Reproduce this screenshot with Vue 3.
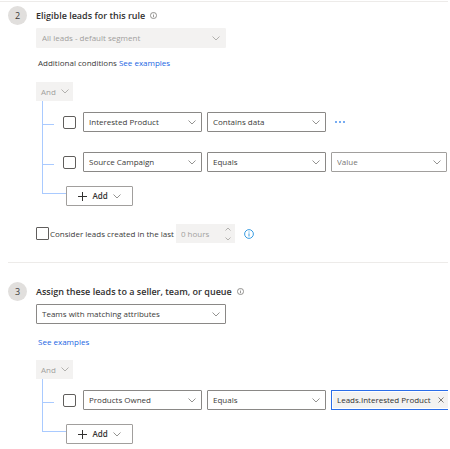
<script setup>
import { ref } from 'vue'

const fields = ['Interested Product', 'Source Campaign', 'Products Owned']
const operators = ['Contains data', 'Equals']

const leadConditions = ref([
  { field: 'Interested Product', operator: 'Contains data', picked: false },
  { field: 'Source Campaign', operator: 'Equals', picked: false, value: '' },
])
const teamCondition = ref({ field: 'Products Owned', operator: 'Equals', picked: false })
const assignTo = ref('Teams with matching attributes')
const recentOnly = ref(false)
</script>

<template>
  <main class="page">
    <section class="step">
      <span class="badge">2</span>
      <div class="body">
        <h2 class="title">
          Eligible leads for this rule
          <svg class="info" viewBox="0 0 16 16" aria-hidden="true"><circle cx="8" cy="8" r="7" /><path d="M8 7v5M8 4v1.6" /></svg>
        </h2>
        <div class="picker wide off">
          <select aria-label="Segment" disabled><option>All leads - default segment</option></select>
          <svg class="chevron" viewBox="0 0 8 5" aria-hidden="true"><path d="M.5.5 4 4 7.5.5" /></svg>
        </div>
        <p class="note">Additional conditions <a href="#examples">See examples</a></p>

        <button class="and" disabled>
          And
          <svg class="chevron" viewBox="0 0 8 5" aria-hidden="true"><path d="M.5.5 4 4 7.5.5" /></svg>
        </button>
        <ul class="tree">
          <li v-for="row in leadConditions" :key="row.field" class="row">
            <input v-model="row.picked" type="checkbox" class="box" :aria-label="'Select ' + row.field" />
            <div class="picker">
              <select v-model="row.field" aria-label="Field"><option v-for="f in fields" :key="f">{{ f }}</option></select>
              <svg class="chevron" viewBox="0 0 8 5" aria-hidden="true"><path d="M.5.5 4 4 7.5.5" /></svg>
            </div>
            <div class="picker">
              <select v-model="row.operator" aria-label="Operator"><option v-for="o in operators" :key="o">{{ o }}</option></select>
              <svg class="chevron" viewBox="0 0 8 5" aria-hidden="true"><path d="M.5.5 4 4 7.5.5" /></svg>
            </div>
            <div v-if="row.value !== undefined" class="picker value">
              <select v-model="row.value" aria-label="Value"><option value="">Value</option></select>
              <svg class="chevron" viewBox="0 0 8 5" aria-hidden="true"><path d="M.5.5 4 4 7.5.5" /></svg>
            </div>
            <button v-else class="more" aria-label="More options">
              <svg viewBox="0 0 10 2" aria-hidden="true"><circle cx="1" cy="1" r="1" /><circle cx="5" cy="1" r="1" /><circle cx="9" cy="1" r="1" /></svg>
            </button>
          </li>
          <li class="last">
            <button class="add">
              <svg class="plus" viewBox="0 0 9 9" aria-hidden="true"><path d="M4.5 0v9M0 4.5h9" /></svg>
              Add
              <svg class="chevron" viewBox="0 0 8 5" aria-hidden="true"><path d="M.5.5 4 4 7.5.5" /></svg>
            </button>
          </li>
        </ul>

        <div class="recent">
          <input id="recent" v-model="recentOnly" type="checkbox" class="box" />
          <label for="recent">Consider leads created in the last</label>
          <div class="spinner">
            <input type="text" value="0 hours" aria-label="Hours" disabled />
            <svg viewBox="0 0 6 14" aria-hidden="true"><path d="M.5 3.500 3 1 5.500 3.500M.5 10.500 3 13 5.500 10.500" /></svg>
          </div>
          <svg class="info blue" viewBox="0 0 16 16" aria-hidden="true"><circle cx="8" cy="8" r="7" /><path d="M8 7v5M8 4v1.600" /></svg>
        </div>
      </div>
    </section>

    <section class="step second">
      <span class="badge">3</span>
      <div class="body">
        <h2 class="title">
          Assign these leads to a seller, team, or queue
          <svg class="info" viewBox="0 0 16 16" aria-hidden="true"><circle cx="8" cy="8" r="7" /><path d="M8 7v5M8 4v1.6" /></svg>
        </h2>
        <div class="picker wide">
          <select v-model="assignTo" aria-label="Assign to"><option>Teams with matching attributes</option></select>
          <svg class="chevron" viewBox="0 0 8 5" aria-hidden="true"><path d="M.5.5 4 4 7.5.5" /></svg>
        </div>
        <p class="note"><a href="#examples">See examples</a></p>

        <button class="and" disabled>
          And
          <svg class="chevron" viewBox="0 0 8 5" aria-hidden="true"><path d="M.5.5 4 4 7.5.5" /></svg>
        </button>
        <ul class="tree">
          <li class="row">
            <input v-model="teamCondition.picked" type="checkbox" class="box" aria-label="Select Products Owned" />
            <div class="picker">
              <select v-model="teamCondition.field" aria-label="Field"><option v-for="f in fields" :key="f">{{ f }}</option></select>
              <svg class="chevron" viewBox="0 0 8 5" aria-hidden="true"><path d="M.5.5 4 4 7.5.5" /></svg>
            </div>
            <div class="picker">
              <select v-model="teamCondition.operator" aria-label="Operator"><option v-for="o in operators" :key="o">{{ o }}</option></select>
              <svg class="chevron" viewBox="0 0 8 5" aria-hidden="true"><path d="M.5.5 4 4 7.5.5" /></svg>
            </div>
            <div class="tags">
              <span class="tag">
                Leads.Interested Product
                <button aria-label="Remove"><svg viewBox="0 0 6 6" aria-hidden="true"><path d="M.5.5l5 5M5.500.5l-5 5" /></svg></button>
              </span>
            </div>
          </li>
          <li class="last">
            <button class="add">
              <svg class="plus" viewBox="0 0 9 9" aria-hidden="true"><path d="M4.5 0v9M0 4.5h9" /></svg>
              Add
              <svg class="chevron" viewBox="0 0 8 5" aria-hidden="true"><path d="M.5.5 4 4 7.5.5" /></svg>
            </button>
          </li>
        </ul>
      </div>
    </section>
  </main>
</template>

<style>
body {
  background: #fff;
}
</style>

<style scoped>
* {
  box-sizing: border-box;
}
.page {
  padding: 1px 2px 0 0;
  font: 8px/12px "Open Sans", "Noto Sans", sans-serif;
  color: #3b3a39;
}
button,
input,
select {
  margin: 0;
  font: inherit;
  color: inherit;
}
svg {
  display: block;
  flex: none;
  fill: none;
  stroke: currentColor;
}
.step {
  display: flex;
  gap: 9px;
  padding: 4px 0 0 8px;
  border-top: 1px solid #edebe9;
}
.step.second {
  margin: 19px 0 0 8px;
  padding: 19px 0 0;
}
.badge {
  flex: none;
  width: 19px;
  height: 19px;
  border-radius: 50%;
  background: #e1dfdd;
  text-align: center;
  font-size: 9px;
  line-height: 19px;
}
.body {
  flex: 1;
  min-width: 0;
}
.title {
  display: flex;
  align-items: center;
  gap: 5px;
  height: 19px;
  margin: 0 0 3px;
  font-size: 9px;
  font-weight: 600;
  color: #323130;
}
.info {
  width: 7px;
  height: 7px;
  color: #605e5c;
  stroke-width: 1.5;
}
.info.blue {
  width: 10px;
  height: 10px;
  margin-left: 8px;
  color: #2b95e0;
}
.picker {
  display: grid;
  flex: none;
  align-items: center;
  width: 119px;
  height: 20px;
  border: 1px solid #8a8886;
  border-radius: 1px;
}
.picker > * {
  grid-area: 1 / 1;
}
.picker select {
  width: 100%;
  min-width: 0;
  height: 100%;
  padding: 0 16px 0 5px;
  border: 0;
  outline: 0;
  appearance: none;
  background: transparent;
}
.picker .chevron {
  justify-self: end;
  margin-right: 5px;
  pointer-events: none;
}
.chevron {
  width: 8px;
  height: 5px;
  color: #797775;
  stroke-width: 0.8;
}
.picker.wide {
  width: 190px;
}
.picker.off {
  border-color: #f3f2f1;
  background: #f3f2f1;
}
.off select,
.off .chevron,
.and,
.and .chevron {
  color: #a19f9d;
  opacity: 1;
}
.picker.value {
  flex: 1;
  min-width: 0;
  margin-right: 1px;
  border-color: #a19f9d;
  color: #797775;
}
.note {
  margin: 9px 0 13px 2px;
}
.second .note {
  margin: 12px 0 12px 2px;
}
a {
  color: #2266e3;
  text-decoration: none;
}
.and {
  display: flex;
  align-items: center;
  gap: 5px;
  height: 19px;
  padding: 0 4px 0 5px;
  border: 0;
  background: #f3f2f1;
}
.tree {
  position: relative;
  display: grid;
  grid-template-columns: minmax(0, 1fr);
  gap: 20px;
  margin: 0 0 0 6px;
  padding: 11px 0 0 24px;
  list-style: none;
}
.tree::before {
  content: "";
  position: absolute;
  top: 0;
  bottom: 12px;
  left: 0;
  border-left: 1px solid #a9caff;
}
.row {
  position: relative;
  display: flex;
  align-items: center;
  gap: 5px;
}
.row::before,
.last::before {
  content: "";
  position: absolute;
  top: 12px;
  left: -24px;
  width: 12px;
  border-top: 1px solid #a9caff;
}
.last {
  position: relative;
  margin-top: -6px;
}
.last::before {
  top: 7px;
  width: 24px;
}
.box {
  flex: none;
  width: 13px;
  height: 13px;
  border: 1px solid #605e5c;
  border-radius: 1px;
  appearance: none;
  background: #fff;
}
.box:checked {
  background: #2266e3;
}
.row .box {
  margin: 0 2px 0 -3px;
  border-radius: 2px;
}
.more {
  padding: 4px;
  border: 0;
  background: none;
  color: #4a90ee;
}
.more svg {
  width: 10px;
  height: 2px;
  fill: currentColor;
  stroke: none;
}
.add {
  display: flex;
  align-items: center;
  justify-content: center;
  gap: 5px;
  width: 67px;
  height: 20px;
  padding: 0;
  border: 1px solid #a19f9d;
  border-radius: 1px;
  background: #fff;
  font-weight: 600;
  color: #323130;
}
.plus {
  width: 9px;
  height: 9px;
}
.tags {
  flex: 1;
  display: flex;
  min-width: 0;
  height: 20px;
  border: solid #2b6de8;
  border-width: 1px 0 1px 1px;
}
.tag {
  flex: 1;
  display: flex;
  align-items: center;
  justify-content: space-between;
  margin: 1px 0 1px 1px;
  padding: 0 4px;
  background: #f3f2f1;
  white-space: nowrap;
  color: #323130;
}
.tag button {
  padding: 0;
  border: 0;
  background: none;
  color: #605e5c;
}
.tag svg {
  width: 6px;
  height: 6px;
  stroke-width: 0.8;
}
.recent {
  display: flex;
  align-items: center;
  gap: 1px;
  margin-top: 18px;
}
.spinner {
  display: flex;
  align-items: center;
  width: 59px;
  height: 19px;
  margin-left: 1px;
  padding: 0 4px 0 5px;
  background: #f3f2f1;
  color: #a19f9d;
}
.spinner input {
  flex: 1;
  min-width: 0;
  padding: 0;
  border: 0;
  background: none;
}
.spinner svg {
  width: 6px;
  height: 14px;
  stroke-width: 0.8;
}
</style>
